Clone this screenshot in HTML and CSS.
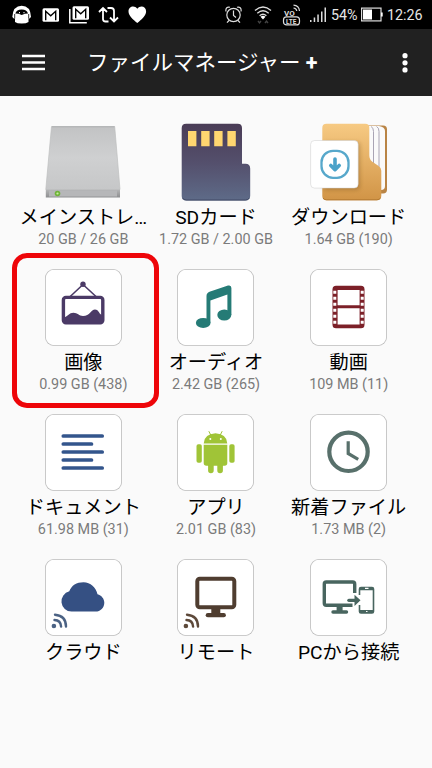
FILE: index.html
```html
<!DOCTYPE html>
<html lang="ja">
<head>
<meta charset="utf-8">
<title>ファイルマネージャー +</title>
<link rel="stylesheet" href="styles.css">
</head>
<body>
<header class="status">
  <div class="status-left">
    <svg width="20" height="20" viewBox="0 0 20 20"><path d="M.3 12Q1 .8 9.700.8T19 12l-1.500 1.500h-1V17q-2 1.500-6.800 1.500T3 17v-3.500H1.800z" fill="#fff"/><path d="M3.300 8.500Q4.500 4.500 9.700 4.500T16 8.500l-3 .2-3.300 1.300-3.200-1.300z" fill="#000"/><path d="M2.700 9v4.500M16.700 9v4.500" stroke="#000" stroke-width=".8"/><path d="M7 7.700h1M11.500 7.700h1" stroke="#fff" stroke-width="1.200"/></svg>
    <svg class="mail" width="18" height="20" viewBox="0 0 18 20"><rect x=".5" y="3.200" width="16.500" height="13.600" rx="1.500" fill="#fff"/><path d="M3.700 15.200V6.200l5 4.500 5-4.500v9" fill="none" stroke="#000" stroke-width="1.400"/></svg>
    <svg class="mails" width="21" height="20" viewBox="0 0 21 20"><path d="M.8 4v13.800h17" fill="none" stroke="#fff" stroke-width="1.500"/><rect x="3.500" y="1.300" width="16.500" height="13.500" rx="1.500" fill="#fff"/><path d="M6.700 13.200V4.300l5 4.500 5-4.500v9" fill="none" stroke="#000" stroke-width="1.400"/></svg>
    <svg class="repost" width="22" height="20" viewBox="0 0 22 20"><path d="M10.500 16.500H7.500Q5 16.500 5 14V4M1 7l4-4 4 4M9.500 3H13q3 0 3 3v10M12 12.500l4 4 4-4" fill="none" stroke="#fff" stroke-width="1.800"/></svg>
    <svg class="heart" width="19" height="20" viewBox="0 0 19 20"><path d="M9.300 18C5 14.500.5 11 .5 6.300c0-5 6-6.300 8.800-2.600 2.900-3.700 8.800-2.400 8.800 2.600 0 4.700-4.500 8.200-8.800 11.700z" fill="#fff"/></svg>
  </div>
  <div class="status-right">
    <svg width="17" height="20" viewBox="0 0 17 20" fill="none" stroke="#ddd" stroke-width="1.200"><circle cx="8.500" cy="10" r="6.700"/><path d="M8.500 5.500v5l2.500 2M1 6.500C.3 3 2.500 1.500 5 2.300M16 6.500c.7-3.500-1.500-5-4-4.200M4 15.500l-2 2.200M13 15.500l2 2.200"/></svg>
    <svg class="wifi" width="18" height="20" viewBox="0 0 18 20" fill="none" stroke="#ddd" stroke-width="1.300"><path d="M1 5.500q8-7 16 0M3.300 8.200q5.700-5 11.400 0M5.600 10.700q3.400-3 6.800 0"/><path d="M6.500 11.800q2.500-2 5 0L9 14.500z" fill="#fff" stroke="none"/><path d="M4 16l1.500 2L7 16M11 18l1.500-2 1.500 2" stroke="#444"/></svg>
    <svg class="volte" width="19" height="22" viewBox="0 0 19 22"><text class="vo" x="2" y="11.800">VO</text><path d="M11.500 4q2.800.3 3.300 3M11.500 1.200Q17 1.500 17.500 7" fill="none" stroke="#ddd" stroke-width="1.200"/><rect x="1.500" y="12.900" width="16" height="8" rx="3" fill="none" stroke="#ddd" stroke-width="1.200"/><text class="lte" x="4" y="19.500">LTE</text></svg>
    <svg class="signal" width="17" height="20" viewBox="0 0 17 20" fill="#ddd"><path d="M0 15h1.500v2H0zM3.700 12.500h1.500V17H3.700zM7.300 9.500h1.500V17H7.300zM11 6.500h1.500V17H11zM14.500 2.500H16V17h-1.500z"/></svg>
    <span class="percent">54%</span>
    <svg class="battery" width="23" height="20" viewBox="0 0 23 20"><rect x=".6" y="3.100" width="19.400" height="12.800" fill="none" stroke="#ddd" stroke-width="1.200"/><path d="M2 4.500h9v10H2zM20 7.500h1.700v4H20z" fill="#fff"/></svg>
    <span class="time">12:26</span>
  </div>
</header>
<nav class="appbar">
  <svg class="menu" width="23" height="17" viewBox="0 0 23 17"><path d="M0 2h23M0 8.500h23M0 15h23" stroke="#fff" stroke-width="2.400"/></svg>
  <h1>ファイルマネージャー <b>+</b></h1>
  <svg class="more" width="6" height="20" viewBox="0 0 6 20" fill="#fff"><circle cx="3" cy="2.700" r="2.600"/><circle cx="3" cy="9.800" r="2.600"/><circle cx="3" cy="16.900" r="2.600"/></svg>
</nav>
<main class="grid">
  <section class="tile">
    <svg class="icon" viewBox="0 0 77 77"><defs><linearGradient id="drive" x2="0" y2="1"><stop stop-color="#c2c3c4"/><stop offset=".5" stop-color="#cfd0d1"/><stop offset="1" stop-color="#c6c7c8"/></linearGradient><linearGradient id="front" x2="0" y2="1"><stop stop-color="#b5b6b7"/><stop offset="1" stop-color="#8d8e90"/></linearGradient></defs><path d="M6.500 2.500h63.200L75 65.500H.8z" fill="url(#drive)" stroke="#bdbebf" stroke-width=".7"/><path d="M7 2.800h62.500" stroke="#aeb0b1"/><path d="M.8 65.500H75v8H.8z" fill="url(#front)"/><path d="M4 66.500h68v6H4z" fill="#b6b7b9"/><circle cx="12.500" cy="69.500" r="2.800" fill="#70b33a"/><circle cx="12.500" cy="69.500" r="1.100" fill="#c9efa4"/></svg>
    <h2>メインストレ…</h2><p>20 GB / 26 GB</p>
  </section>
  <section class="tile">
    <svg class="icon" viewBox="-.7 0 77 77"><defs><linearGradient id="sd" x2="0" y2="1"><stop stop-color="#4a3c56"/><stop offset=".5" stop-color="#544f6c"/><stop offset="1" stop-color="#5e6b88"/></linearGradient></defs><path d="M8.500-.3H60q4.300 0 4.300 4.300v35.700h3.500q4.700 0 4.700 4.700v27.300q0 4.700-4.700 4.700H8.500Q4 76.400 4 71.900V4Q4-.3 8.500-.3z" fill="url(#sd)"/><path d="M5 74q1 2 3.500 2h59.300q2.600 0 3.700-2" fill="none" stroke="#414964"/><path d="M10.300 7h8.400v15.300h-8.400zM23.500 7h8.400v15.300h-8.400zM36.500 7h8.400v15.300h-8.400zM49.700 7h8.400v15.300h-8.400z" fill="#ffd670"/></svg>
    <h2>SDカード</h2><p>1.72 GB / 2.00 GB</p>
  </section>
  <section class="tile">
    <svg class="icon" viewBox="0 0 77 77"><defs><linearGradient id="folder" x2="0" y2="1"><stop stop-color="#f7ca83"/><stop offset="1" stop-color="#d19446"/></linearGradient><filter id="soft" x="-30%" y="-30%" width="160%" height="160%"><feGaussianBlur stdDeviation="2.200"/></filter></defs><path d="M56 1.500h17q4 0 4 4v60q0 4-4 4H56z" fill="#b98445"/><path d="M57 2h12q6 1 6 5v55q0 4-4 4H57z" fill="#fafafa"/><path d="M61 2.500q2.500 1 2.500 5v55M66.500 2.500q2.500 1 2.500 5v55" fill="none" stroke="#a9a4b4" stroke-width="1"/><path d="M16.500-.2h38.800q4 0 4 4v27.500q0 4 3 6.500l6 4q3 2 3 5v25q0 4.500-4.500 4.500H16.500q-4.200 0-4.200-4.200V4q0-4.200 4.200-4.200z" fill="url(#folder)"/><path d="M13 74q1 1.800 3.500 1.800h50.300q2.500 0 3.700-1.800" fill="none" stroke="#b47b32"/><rect x="13" y="18" width="37" height="48" rx="4" fill="#684514" opacity=".32" filter="url(#soft)"/><rect x=".6" y="16.500" width="47.600" height="47.600" rx="4" fill="#fff" stroke="#ccc" stroke-width=".5"/><rect x="11.500" y="26.800" width="27" height="27" rx="11.500" fill="#fff" stroke="#57a8cb" stroke-width="2.300"/><path d="M25 35v9.500M20.800 41.500l4.200 4.200 4.200-4.200" fill="none" stroke="#4aa2c9" stroke-width="3.600" stroke-linecap="round" stroke-linejoin="round"/></svg>
    <h2>ダウンロード</h2><p>1.64 GB (190)</p>
  </section>
  <section class="tile selected">
    <svg class="icon card" viewBox="0 0 77 77"><path d="M24.700 28L38 15.500 51.500 28" fill="none" stroke="#4b3a66" stroke-width="1.600"/><circle cx="38" cy="15.300" r="2.700" fill="#4b3a66"/><rect x="18.400" y="28.400" width="39.400" height="25.300" rx="2.500" fill="none" stroke="#4b3a66" stroke-width="3.400"/><path d="M19 48.500c4-1 5-4.700 9.500-4.700 4 0 5.500 3.200 9.500 3.200 7 0 8-6.500 12-6.500s4 5.500 8 6v7H19z" fill="#4b3a66"/></svg>
    <h2>画像</h2><p>0.99 GB (438)</p>
  </section>
  <section class="tile">
    <svg class="icon card" viewBox="0 0 77 77" fill="#257b76"><path d="M29.500 54V27q0-3 3-4.200L51 16.600q3.400-.8 3.400 2.400v27h-4V25.500L33.400 31.500V54z"/><ellipse cx="26.200" cy="53.900" rx="7.300" ry="5"/><ellipse cx="47.300" cy="46" rx="7" ry="5.500"/></svg>
    <h2>オーディオ</h2><p>2.42 GB (265)</p>
  </section>
  <section class="tile">
    <svg class="icon card" viewBox="0 0 77 77"><rect x="22.500" y="16.700" width="32" height="42.600" rx="3.500" fill="#7c2028"/><path d="M27.600 21h22v15.200h-22zM27.600 39.300h22V55.500h-22z" fill="#fff"/><path d="M24.800 21.800v36M52.200 21.800v36" stroke="#fff" stroke-width="3" stroke-dasharray="3 3"/></svg>
    <h2>動画</h2><p>109 MB (11)</p>
  </section>
  <section class="tile">
    <svg class="icon card" viewBox="0 0 77 77"><path d="M18.300 22H57.200M18.300 30H46.500M18.300 38H57.200M18.300 46H46.500M18.300 54H57.200" stroke="#33558c" stroke-width="3.700" stroke-linecap="round"/></svg>
    <h2>ドキュメント</h2><p>61.98 MB (31)</p>
  </section>
  <section class="tile">
    <svg class="icon card" viewBox="0 0 77 77" fill="#a0c437"><path d="M26.700 29.400Q27 20 38.500 19.200 50 20 50.300 29.400zM26.700 30.700h23.600V49q0 2.700-2.700 2.700h-1.700v4.800a2.800 2.800 0 0 1-5.600 0v-4.800h-3.600v4.800a2.800 2.800 0 0 1-5.600 0v-4.800h-1.700Q26.700 51.700 26.700 49z"/><path d="M34 21.500L31.800 17.200M43 21.500L45.200 17.200" stroke="#a0c437"/><rect x="19.500" y="30.300" width="5.300" height="18.500" rx="1.800"/><rect x="52.300" y="30.300" width="5.300" height="18.500" rx="1.800"/><circle cx="33.300" cy="25" r="1" fill="#fff"/><circle cx="43.800" cy="25" r="1" fill="#fff"/></svg>
    <h2>アプリ</h2><p>2.01 GB (83)</p>
  </section>
  <section class="tile">
    <svg class="icon card" viewBox="0 0 77 77" fill="none" stroke="#58706b"><circle cx="38.500" cy="37.800" r="19.200" stroke-width="4.200"/><path d="M38.200 27.200V39.500L48.200 45.300" stroke-width="3.200"/></svg>
    <h2>新着ファイル</h2><p>1.73 MB (2)</p>
  </section>
  <section class="tile">
    <svg class="icon card" viewBox="0 0 77 77"><path d="M26.500 52.600a10.300 10.300 0 0 1-2.200-20.300C26.500 26.500 31.500 23.300 38.500 23.300c7 0 12.500 5 14 12 4 1 6.800 4.500 6.800 8.500 0 5-3.800 8.800-8.800 8.800z" fill="#355083"/><g fill="none" stroke="#4b6284" stroke-width="2.400" stroke-linecap="round"><path d="M9.500 61q6.300.3 6.600 6.600M10 55.700q11 .8 11 11.900"/><circle cx="8.900" cy="67" r="1.100" fill="#4b6284"/></g></svg>
    <h2>クラウド</h2><p></p>
  </section>
  <section class="tile">
    <svg class="icon card" viewBox="0 0 77 77"><rect x="20.300" y="19.700" width="37" height="28.500" rx="2.500" fill="none" stroke="#4f3d30" stroke-width="4"/><path d="M34.300 49h9v5.200h-9z" fill="#4f3d30"/><path d="M30.800 56.200h16" stroke="#4f3d30" stroke-width="4.200" stroke-linecap="round"/><g fill="none" stroke="#5d493a" stroke-width="2.400" stroke-linecap="round"><path d="M9.500 61q6.300.3 6.600 6.600M10 55.700q11 .8 11 11.900"/><circle cx="8.900" cy="67" r="1.100" fill="#5d493a"/></g></svg>
    <h2>リモート</h2><p></p>
  </section>
  <section class="tile">
    <svg class="icon card" viewBox="0 0 77 77" fill="none" stroke="#48655f"><path d="M44.700 34V25q0-2-2-2H16.300q-2 0-2 2V44.300q0 2 2 2H42.500" stroke-width="3.400"/><path d="M29.600 47v5" stroke-width="6"/><path d="M23 53h13.500" stroke-width="3.400" stroke-linecap="round"/><path d="M38.800 41.300h9" stroke-width="3.200" stroke-linecap="round"/><path d="M44.500 35.700l6 5.600-6 5.600z" fill="#48655f" stroke="none"/><path d="M49.500 36V30q0-1.500 1.500-1.500h11q1.500 0 1.500 1.500V52.500q0 1.500-1.500 1.500H51q-1.500 0-1.500-1.500V46" stroke-width="1.600"/><path d="M50 29.700h13M50 52.500h13" stroke-width="3.200"/><path d="M55 29.300h3.500M56 52.500h1.500" stroke="#fff" stroke-width="1.200"/></svg>
    <h2>PCから接続</h2><p></p>
  </section>
</main>
</body>
</html>
```
FILE: styles.css
```css
*, *::after { box-sizing: border-box; }

body {
  margin: 0;
  min-height: 768px;
  background: #fafafa;
  color: #000;
  font-family: Roboto, "Noto Sans CJK JP", sans-serif;
}

h1, h2, p { margin: 0; font-weight: 400; }

svg { display: block; flex: none; }

.status {
  height: 29px;
  background: #000;
  color: #e6e6e6;
  display: flex;
  justify-content: space-between;
  padding: 0 9px 0 12px;
}

.status-left,
.status-right { display: flex; align-items: center; height: 29px; }

.mail { margin-left: 10px; }
.mails { margin-left: 9px; }
.repost { margin-left: 8px; }
.heart { margin-left: 8px; }

.wifi { margin-left: 12px; }
.volte { margin-left: 10px; }
.signal { margin-left: 9px; }
.percent { margin-left: 4px; width: 26px; }
.battery { margin-left: 4px; }
.time { margin-left: 3px; width: 36px; }
.percent, .time { font-size: 14.3px; white-space: nowrap; }
.vo { font-size: 8px; font-weight: 700; fill: #ddd; }
.lte { font-size: 6.5px; font-weight: 700; fill: #ddd; }

.appbar {
  height: 67px;
  background: #212121;
  color: #fff;
  display: flex;
  align-items: center;
  padding: 0 24px 0 22px;
}

.appbar h1 {
  margin-left: 42px;
  flex: 1;
  font-size: 21.5px;
  line-height: 30px;
  white-space: nowrap;
}

.grid {
  display: grid;
  grid-template-columns: repeat(3, 1fr);
  grid-auto-rows: 145.2px;
  padding: 27.5px 17px 0;
}

.tile {
  position: relative;
  display: flex;
  flex-direction: column;
  align-items: center;
}

.icon { width: 77px; height: 77px; overflow: visible; }

.card {
  background: #fff;
  border-radius: 9px;
  box-shadow: inset 0 0 0 0.8px #bbb;
}

.tile h2 {
  margin-top: 3px;
  font-size: 19.2px;
  line-height: 27px;
  white-space: nowrap;
}

.tile p {
  color: #7b7b7b;
  font-size: 14.4px;
  line-height: 18px;
  white-space: nowrap;
}

/* Highlight frame around the chosen category */
.selected::after {
  content: "";
  position: absolute;
  left: -5px;
  top: -15.5px;
  width: 147px;
  height: 155px;
  border: 5px solid #ee0509;
  border-radius: 15px;
}
```
